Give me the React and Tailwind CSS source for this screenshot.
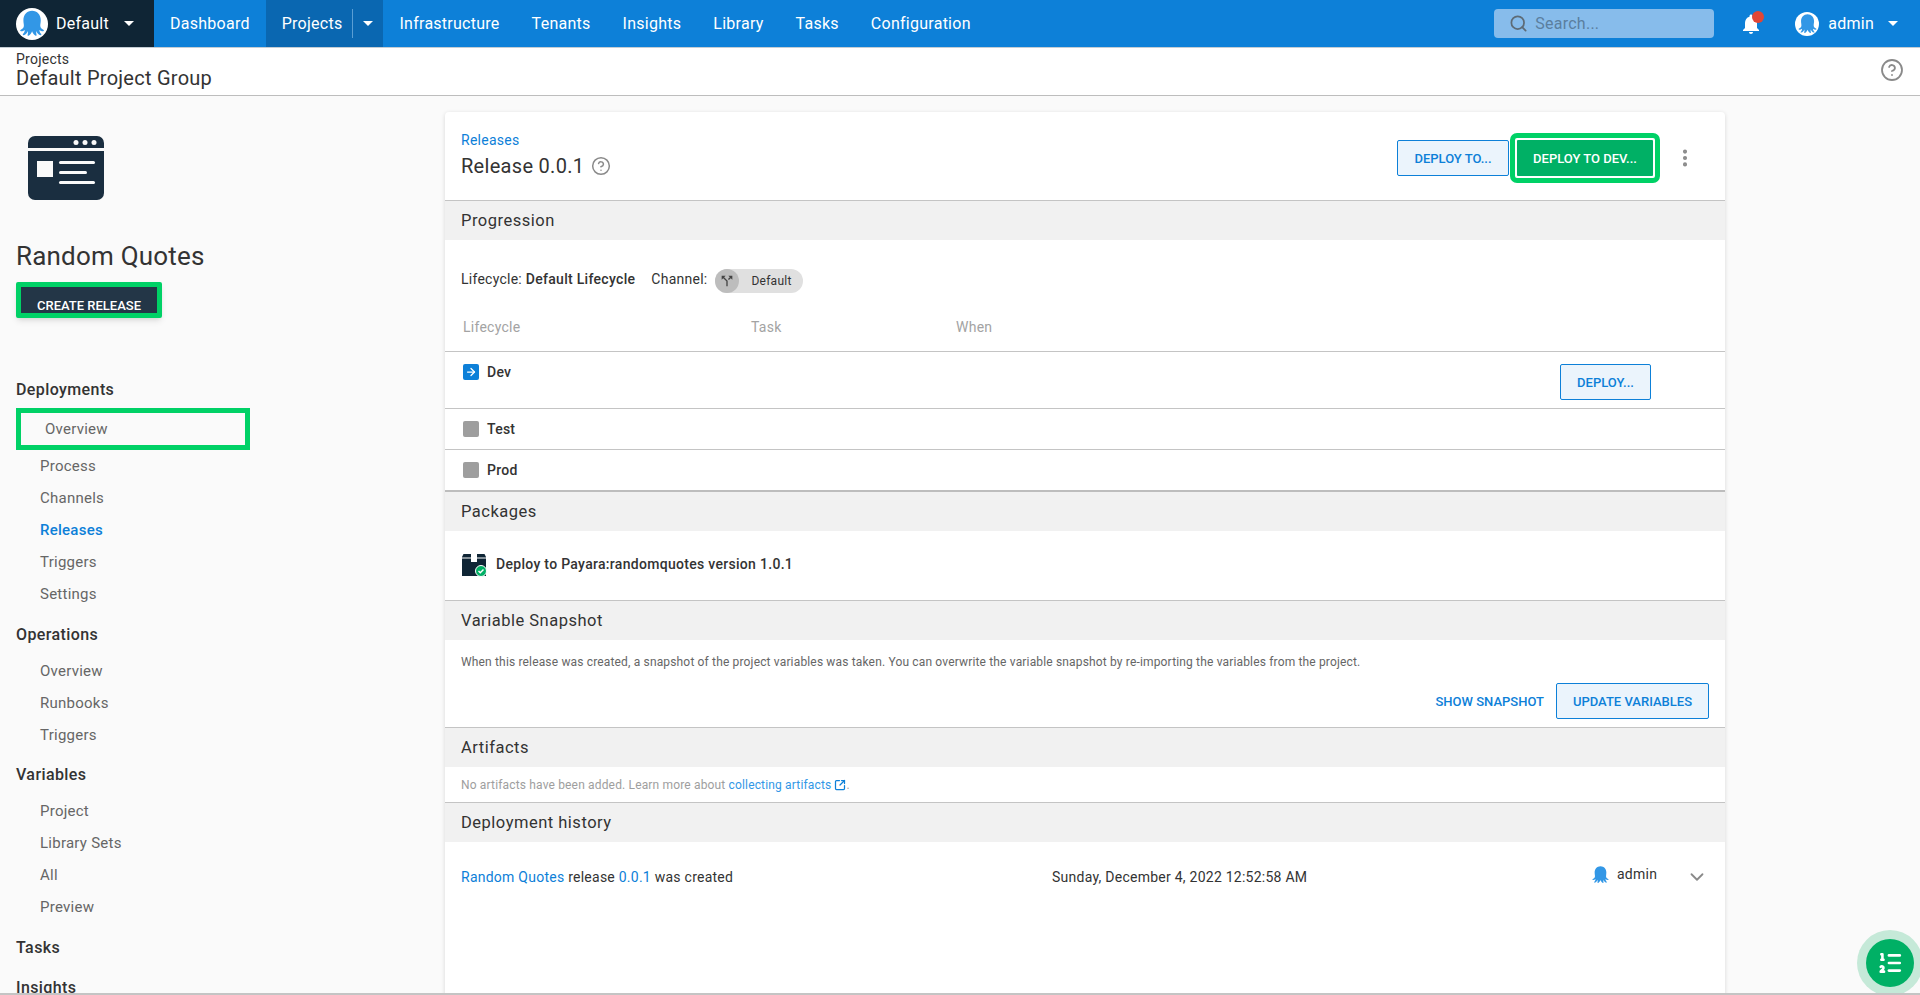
import React from 'react';
import { ArrowRight, ChevronDown, CircleHelp, EllipsisVertical, ListOrdered, Search, SquareArrowOutUpRight } from 'lucide-react';

const Octopus = ({ className }) => (
  <svg viewBox="0 0 24 24" className={className} fill="currentColor">
    <path d="M12 1.500C7.600 1.500 4.600 5 4.600 9.500C4.600 11.500 5.100 13 5 14.500C4.900 16 3.800 17 2.400 17.700C1.600 18.100 1.700 19 2.600 19C3.800 19 4.900 18.600 5.800 17.800C5.700 19.200 5.100 20.400 4.300 21.200C3.800 21.700 4.100 22.400 4.800 22.300C6.400 22.100 7.800 20.400 8.400 18.700C8.600 19.900 8.500 21 8.200 21.900C8 22.400 8.400 22.900 9 22.700C10.200 22.300 11.400 20.600 12 19C12.600 20.600 13.800 22.300 15 22.700C15.600 22.900 16 22.400 15.800 21.900C15.500 21 15.400 19.900 15.600 18.700C16.200 20.400 17.600 22.100 19.200 22.300C19.900 22.400 20.200 21.700 19.700 21.200C18.900 20.400 18.300 19.200 18.200 17.800C19.100 18.600 20.200 19 21.400 19C22.300 19 22.400 18.100 21.600 17.700C20.200 17 19.100 16 19 14.500C18.900 13 19.400 11.500 19.400 9.500C19.400 5 16.400 1.500 12 1.500Z" />
  </svg>
);

const Caret = ({ className = '' }) => (
  <span className={`inline-block w-0 h-0 border-x-[5px] border-x-transparent border-t-[5px] border-t-white ${className}`} />
);

const Avatar = ({ className }) => (
  <span className={`flex items-center justify-center rounded-full bg-white text-[#3297e6] ${className}`}>
    <Octopus className="w-[88%] h-[88%]" />
  </span>
);

const NavLink = ({ label }) => (
  <a className="px-4 h-full flex items-center text-white">{label}</a>
);

const TopNav = () => (
  <header className="h-[48px] flex items-stretch bg-[#0d80d8] border-b border-[#c4cdd4] text-[16px] tracking-[0.26px] shrink-0">
    <div className="w-[154px] bg-[#0f2535] flex items-center pl-4 text-white">
      <Avatar className="w-8 h-8" />
      <span className="ml-[8px]">Default</span>
      <Caret className="ml-[15px]" />
    </div>
    <NavLink label="Dashboard" />
    <div className="flex items-center bg-[#0a67b1] text-white h-full">
      <span className="pl-4 pr-[10px]">Projects</span>
      <span className="h-[29px] border-l border-[#5a9ed4]" />
      <span className="w-[30px] flex justify-center"><Caret /></span>
    </div>
    <NavLink label="Infrastructure" />
    <NavLink label="Tenants" />
    <NavLink label="Insights" />
    <NavLink label="Library" />
    <NavLink label="Tasks" />
    <NavLink label="Configuration" />
    <div className="ml-auto flex items-center">
      <div className="w-[220px] h-[29px] bg-[#87bceb] rounded flex items-center pl-[15px] text-[#5b7f9f]">
        <Search className="w-[19px] h-[19px] text-[#5d6b76]" strokeWidth={2.2} />
        <span className="ml-[7px] text-[16px]">Search...</span>
      </div>
      <div className="relative ml-[25px] w-[24px] h-[24px] text-white">
        <svg viewBox="0 0 24 24" className="w-full h-full" fill="currentColor">
          <path d="M12 22c1.100 0 2-.9 2-2h-4c0 1.100.89 2 2 2zm6-6v-5c0-3.070-1.640-5.640-4.500-6.320V4c0-.83-.67-1.500-1.500-1.500s-1.500.67-1.500 1.500v.68C7.630 5.360 6 7.920 6 11v5l-2 2v1h16v-1l-2-2z" />
        </svg>
        <span className="absolute -top-[1px] right-[-1px] w-[12px] h-[12px] rounded-full bg-[#e04636]" />
      </div>
      <Avatar className="ml-[32px] w-6 h-6" />
      <span className="ml-[9px] text-white">admin</span>
      <Caret className="ml-[14px] mr-[22px]" />
    </div>
  </header>
);

const PageHeader = () => (
  <div className="h-[48px] bg-white border-b border-[#bdbdbd] flex items-start justify-between pl-4 pr-[16px] shrink-0 text-[#333333]">
    <div>
      <div className="text-[14px] leading-[16px] pt-[3px]">Projects</div>
      <div className="text-[20px] leading-[24px] tracking-[0.25px] -mt-[1px]">Default Project Group</div>
    </div>
    <CircleHelp className="w-[24px] h-[24px] mt-[10px] text-[#8a8a8a]" strokeWidth={1.8} />
  </div>
);

const SideHeading = ({ label }) => (
  <div className="h-[40px] flex items-center text-[16px] font-medium tracking-[0.4px] text-[#333333]">{label}</div>
);

const SideLink = ({ label, active }) => (
  <a className={`h-[32px] flex items-center pl-6 text-[15px] ${active ? 'text-[#0d80d8] font-medium' : 'text-[#666666]'}`}>{label}</a>
);

const ProjectIcon = () => (
  <svg viewBox="0 0 76 64" className="w-[76px] h-[64px] ml-3">
    <rect width="76" height="64" rx="7" fill="#1a2e40" />
    <rect y="12" width="76" height="3" fill="#fafafa" />
    <circle cx="48" cy="6.500" r="2.500" fill="#fafafa" />
    <circle cx="57" cy="6.500" r="2.500" fill="#fafafa" />
    <circle cx="66" cy="6.500" r="2.500" fill="#fafafa" />
    <rect x="9" y="25" width="16" height="16" fill="#fafafa" />
    <rect x="31" y="25" width="36" height="3" rx="1.500" fill="#fafafa" />
    <rect x="31" y="35" width="28" height="3" rx="1.500" fill="#fafafa" />
    <rect x="31" y="45" width="36" height="3" rx="1.500" fill="#fafafa" />
  </svg>
);

const Sidebar = () => (
  <aside className="w-[445px] shrink-0 pl-4 pt-10">
    <ProjectIcon />
    <h1 className="mt-[39px] text-[26px] leading-[34px] tracking-[0.2px] text-[#333333]">Random Quotes</h1>
    <button className="mt-[9px] w-[146px] h-[36px] flex items-end justify-center bg-[#233647] border-[5px] border-[#00d166] rounded-[2px] text-white text-[13px] leading-[14px] font-medium tracking-normal shadow-md">CREATE RELEASE</button>
    <div className="mt-[50px]">
      <div className="relative top-[2px]"><SideHeading label="Deployments" /></div>
      <div className="w-[234px] h-[42px] border-[5px] border-[#00d166] flex items-center pl-6 text-[15px] text-[#666666]">Overview</div>
      <div>
        <SideLink label="Process" />
        <SideLink label="Channels" />
        <SideLink label="Releases" active />
        <SideLink label="Triggers" />
        <SideLink label="Settings" />
      </div>
      <div className="mt-[5px]"><SideHeading label="Operations" /></div>
      <SideLink label="Overview" />
      <SideLink label="Runbooks" />
      <SideLink label="Triggers" />
      <div className="mt-[4px]"><SideHeading label="Variables" /></div>
      <SideLink label="Project" />
      <SideLink label="Library Sets" />
      <SideLink label="All" />
      <SideLink label="Preview" />
      <div className="mt-[5px]"><SideHeading label="Tasks" /></div>
      <SideHeading label="Insights" />
    </div>
  </aside>
);

const SectionHead = ({ label, line = 'h-[40px] border-t border-[#c4c4c4]' }) => (
  <div className={`bg-[#f1f1f1] flex items-center px-4 pt-[2px] text-[16.5px] tracking-[0.5px] text-[#333333] ${line}`}>{label}</div>
);

const OutlineBtn = ({ label, className = '' }) => (
  <button className={`h-[36px] pt-[2px] flex items-center justify-center bg-[#ebf4fc] border border-[#0d80d8] rounded-[2px] text-[#0d80d8] text-[13px] font-medium tracking-normal ${className}`}>{label}</button>
);

const Phase = ({ label, active, h, line = 'border-b border-[#c4c4c4]', children }) => (
  <div className={`flex items-start justify-between pl-[18px] ${h} ${line}`}>
    <div className="flex items-center h-[16px] mt-3">
      {active
        ? <span className="w-4 h-4 rounded-[2px] bg-[#0d80d8] text-white flex items-center justify-center"><ArrowRight className="w-3 h-3" strokeWidth={2.500} /></span>
        : <span className="w-4 h-4 rounded-[2px] bg-[#9e9e9e]" />}
      <span className="ml-[8px] pt-[1px] text-[14px] font-medium text-[#333333]">{label}</span>
    </div>
    {children}
  </div>
);

const PackageIcon = () => (
  <svg viewBox="0 0 26 24" className="w-[26px] h-[24px]">
    <path d="M1 4 2.500 1h21L25 4V23H1z" fill="#0f2535" />
    <rect x="10" y="0" width="6" height="9" fill="#fff" />
    <rect x="0" y="4.500" width="26" height="1" fill="#fff" />
    <circle cx="20" cy="18" r="5.500" fill="#00b065" stroke="#fff" strokeWidth="1" />
    <path d="M17.500 18l1.800 1.800 3.200-3.300" fill="none" stroke="#fff" strokeWidth="1.400" />
  </svg>
);

const ReleaseCard = () => (
  <main className="w-[1280px] h-full shrink-0 mt-4 bg-white rounded-t shadow-[0_1px_4px_rgba(0,0,0,0.14)] text-[#333333]">
    <div className="h-[88px] flex items-start justify-between pl-4">
      <div className="pt-[18px]">
        <a className="block text-[14px] leading-[20px] text-[#0d80d8]">Releases</a>
        <div className="flex items-center text-[20px] leading-[28px] tracking-[0.3px] mt-[2px]">
          Release 0.0.1
          <CircleHelp className="ml-[7px] w-[20px] h-[20px] text-[#8a8a8a]" strokeWidth={1.800} />
        </div>
      </div>
      <div className="flex items-center mt-[21px]">
        <OutlineBtn label="DEPLOY TO..." className="w-[112px]" />
        <button className="ml-[1px] w-[150px] h-[50px] border-[5px] border-[#00d166] rounded-[7px] bg-white p-[2px]">
          <span className="flex items-center justify-center w-full h-full pt-[2px] rounded-[1px] bg-[#00b065] text-white text-[13px] font-medium tracking-normal">DEPLOY TO DEV...</span>
        </button>
        <EllipsisVertical className="ml-[14px] mr-[29px] w-[22px] h-[22px] text-[#8a8a8a]" strokeWidth={2.500} />
      </div>
    </div>

    <SectionHead label="Progression" />
    <div className="h-[71px] flex items-end pl-4 pb-[21px] text-[14px]">
      <span>Lifecycle: <b className="font-medium tracking-[0.3px]">Default Lifecycle</b></span>
      <span className="ml-4">Channel:</span>
      <span className="ml-2 relative top-[3px] w-[88px] h-[24px] rounded-full bg-[#e0e0e0] flex items-center text-[12px]">
        <span className="w-6 h-6 rounded-full bg-[#bdbdbd] flex items-center justify-center">
          <svg viewBox="0 0 24 24" className="w-4 h-4" fill="#444444"><path d="M14 4l2.290 2.290-2.880 2.880 1.420 1.420 2.880-2.880L20 10V4zm-4 0H4v6l2.290-2.290 4.710 4.700V20h2v-8.410l-5.290-5.300z" /></svg>
        </span>
        <span className="ml-[12px]">Default</span>
      </span>
    </div>
    <div className="h-[41px] flex items-center pl-[18px] border-b border-[#c4c4c4] pb-[8px] text-[14px] text-[#a3a3a3]">
      <span className="w-[288px]">Lifecycle</span>
      <span className="w-[205px]">Task</span>
      <span>When</span>
    </div>
    <Phase label="Dev" active h="h-[57px]">
      <OutlineBtn label="DEPLOY..." className="w-[91px] mt-3 mr-[74px]" />
    </Phase>
    <Phase label="Test" h="h-[41px]" />
    <Phase label="Prod" h="h-[40px]" line="" />

    <SectionHead label="Packages" line="h-[41px] border-t-2 border-[#bdbdbd]" />
    <div className="h-[69px] flex items-center pl-4 pb-[2px]">
      <PackageIcon />
      <span className="ml-[9px] text-[14px] font-medium tracking-[0.3px]">Deploy to Payara:randomquotes version 1.0.1</span>
    </div>

    <SectionHead label="Variable Snapshot" />
    <div className="h-[87px] px-4 text-[12px] tracking-[0.16px] text-[#666666]">
      <p className="pt-[14px] leading-[16px]">When this release was created, a snapshot of the project variables was taken. You can overwrite the variable snapshot by re-importing the variables from the project.</p>
      <div className="mt-[13px] flex items-center justify-end">
        <a className="pt-[2px] text-[13px] font-medium tracking-normal text-[#0d80d8]">SHOW SNAPSHOT</a>
        <OutlineBtn label="UPDATE VARIABLES" className="w-[153px] ml-3" />
      </div>
    </div>

    <SectionHead label="Artifacts" />
    <div className="h-[35px] flex items-center px-4 text-[12px] tracking-[0.16px] text-[#9e9e9e]">
      No artifacts have been added. Learn more about&nbsp;
      <a className="text-[#3297e6]">collecting artifacts</a>
      <SquareArrowOutUpRight className="ml-[3px] w-[12px] h-[12px] text-[#0d80d8]" strokeWidth={2.500} />
      .
    </div>

    <SectionHead label="Deployment history" />
    <div className="flex items-center h-[70px] px-4 text-[14px]">
      <span className="w-[591px]"><a className="text-[#0d80d8]">Random Quotes</a> release <a className="text-[#0d80d8]">0.0.1</a> was created</span>
      <span className="w-[539px]">Sunday, December 4, 2022 12:52:58 AM</span>
      <span className="flex items-center relative -top-[3px] w-[95px]">
        <Octopus className="w-[19px] h-[19px] text-[#3297e6]" />
        <span className="ml-[7px]">admin</span>
      </span>
      <ChevronDown className="w-[22px] h-[22px] text-[#8a8a8a]" strokeWidth={2} />
    </div>
  </main>
);

export default function App() {
  return (
    <div className="relative h-[995px] overflow-hidden flex flex-col bg-[#fafafa] border-b-2 border-[#c4c4c4] tracking-[0.25px] font-['Roboto',sans-serif]">
      <TopNav />
      <PageHeader />
      <div className="flex min-h-0 flex-1">
        <Sidebar />
        <ReleaseCard />
      </div>
      <div className="absolute right-[-3px] bottom-[-3px] w-[66px] h-[66px] rounded-full bg-[#c5e9d8] flex items-center justify-center">
        <span className="w-12 h-12 rounded-full bg-[#00b065] text-white flex items-center justify-center">
          <ListOrdered className="w-[26px] h-[26px]" strokeWidth={2.400} />
        </span>
      </div>
    </div>
  );
}
